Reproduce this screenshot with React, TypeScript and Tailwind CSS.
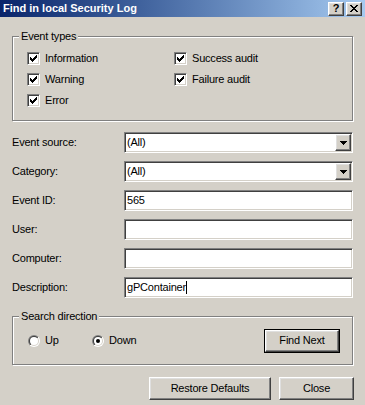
import React from "react";

const raised =
  "border border-t-white border-l-white border-r-[#404040] border-b-[#404040] shadow-[inset_-1px_-1px_0_#808080,inset_1px_1px_0_#dfdfdf] bg-[#d4d0c8]";
const sunken =
  "border border-t-[#808080] border-l-[#808080] border-r-white border-b-white shadow-[inset_1px_1px_0_#404040,inset_-1px_-1px_0_#d4d0c8]";
const etched =
  "border border-[#808080] shadow-[inset_1px_1px_0_#fff,1px_1px_0_#fff]";

const CHECK = [
  "......X",
  ".....XX",
  "X...XXX",
  "XX.XXX.",
  "XXXXX..",
  ".XXX...",
  "..X....",
];

function Checkbox({ label }: { label: string }) {
  return (
    <div className="flex items-center h-[13px]">
      <div className={`w-[13px] h-[13px] bg-white flex items-center justify-center ${sunken}`}>
        <svg width="7" height="7" viewBox="0 0 7 7" shapeRendering="crispEdges">
          {CHECK.flatMap((row, y) =>
            row.split("").map((c, x) =>
              c === "X" ? <rect key={`${x}-${y}`} x={x} y={y} width="1" height="1" fill="#000" /> : null
            )
          )}
        </svg>
      </div>
      <span className="ml-[5px] leading-[13px]">{label}</span>
    </div>
  );
}

function Radio({ checked, label }: { checked: boolean; label: string }) {
  const id = checked ? "r1" : "r0";
  return (
    <div className="flex items-center">
      <svg width="12" height="12" viewBox="0 0 12 12">
        <defs>
          <linearGradient id={`${id}a`} x1="0" y1="0" x2="1" y2="1">
            <stop offset="0.5" stopColor="#808080" />
            <stop offset="0.5" stopColor="#ffffff" />
          </linearGradient>
          <linearGradient id={`${id}b`} x1="0" y1="0" x2="1" y2="1">
            <stop offset="0.5" stopColor="#404040" />
            <stop offset="0.5" stopColor="#d4d0c8" />
          </linearGradient>
        </defs>
        <circle cx="6" cy="6" r="6" fill={`url(#${id}a)`} />
        <circle cx="6" cy="6" r="5" fill={`url(#${id}b)`} />
        <circle cx="6" cy="6" r="4" fill="#fff" />
        {checked && <circle cx="6" cy="6" r="2" fill="#000" />}
      </svg>
      <span className="ml-[5px]">{label}</span>
    </div>
  );
}

function DropArrow() {
  return (
    <div className={`w-[16px] h-[17px] flex items-center justify-center ${raised}`}>
      <svg width="7" height="4" viewBox="0 0 7 4" shapeRendering="crispEdges">
        <path d="M0 0h7v1H0z M1 1h5v1H1z M2 2h3v1H2z M3 3h1v1H3z" fill="#000" />
      </svg>
    </div>
  );
}

function Field({
  label,
  value,
  combo,
  cursor,
}: {
  label: string;
  value?: string;
  combo?: boolean;
  cursor?: boolean;
}) {
  return (
    <div className="flex items-center h-[21px]">
      <div className="w-[112px]">{label}</div>
      <div className={`flex-1 h-[21px] bg-white flex items-center pl-[2px] pr-[1px] ${sunken}`}>
        <div className="flex-1 flex items-center">
          <span>{value}</span>
          {cursor && <span className="w-px h-[13px] bg-black" />}
        </div>
        {combo && <DropArrow />}
      </div>
    </div>
  );
}

export default function App() {
  return (
    <div className="w-[365px] h-[405px] bg-[#d4d0c8] flex flex-col overflow-hidden text-[11px] text-black font-['Liberation_Sans',Arial,sans-serif] tracking-[-0.2px]">
      {/* Title bar */}
      <div className="h-[17px] bg-linear-to-r from-[#0a246a] to-[#a6caf0] flex items-center pl-[3px] pr-[3px]">
        <span className="text-white font-bold text-[11px] tracking-normal leading-none">
          Find in local Security Log
        </span>
        <div className="ml-auto flex gap-[2px]">
          <div className={`w-[16px] h-[14px] flex items-center justify-center font-bold text-[11px] leading-none ${raised}`}>
            ?
          </div>
          <div className={`w-[16px] h-[14px] flex items-center justify-center ${raised}`}>
            <svg width="8" height="7" viewBox="0 0 8 7" shapeRendering="crispEdges">
              <path
                d="M0 0h2v1H0z M6 0h2v1H6z M1 1h2v1H1z M5 1h2v1H5z M2 2h4v1H2z M3 3h2v1H3z M2 4h4v1H2z M1 5h2v1H1z M5 5h2v1H5z M0 6h2v1H0z M6 6h2v1H6z"
                fill="#000"
              />
            </svg>
          </div>
        </div>
      </div>

      <div className="px-[12px] flex flex-col">
        {/* Event types */}
        <div className={`relative mt-[19px] h-[85px] pt-[15px] pl-[14px] ${etched}`}>
          <span className="absolute -top-[7px] left-[6px] px-[2px] bg-[#d4d0c8] leading-[13px]">
            Event types
          </span>
          <div className="grid grid-cols-[147px_1fr] gap-y-[8px]">
            <Checkbox label="Information" />
            <Checkbox label="Success audit" />
            <Checkbox label="Warning" />
            <Checkbox label="Failure audit" />
            <Checkbox label="Error" />
          </div>
        </div>

        {/* Fields */}
        <div className="mt-[11px] flex flex-col gap-[8px]">
          <Field label="Event source:" value="(All)" combo />
          <Field label="Category:" value="(All)" combo />
          <Field label="Event ID:" value="565" />
          <Field label="User:" />
          <Field label="Computer:" />
          <Field label="Description:" value="gPContainer" cursor />
        </div>

        {/* Search direction */}
        <div className={`relative mt-[18px] h-[49px] flex items-center pl-[15px] pr-[12px] ${etched}`}>
          <span className="absolute -top-[7px] left-[6px] px-[2px] bg-[#d4d0c8] leading-[13px]">
            Search direction
          </span>
          <div className="w-[64px]">
            <Radio checked={false} label="Up" />
          </div>
          <Radio checked label="Down" />
          <div className="ml-auto border border-black">
            <div className={`w-[74px] h-[22px] flex items-center justify-center ${raised}`}>
              Find Next
            </div>
          </div>
        </div>

        {/* Bottom buttons */}
        <div className="mt-[12px] flex justify-end gap-[8px] pr-[-1px]">
          <div className={`w-[122px] h-[23px] flex items-center justify-center ${raised}`}>
            Restore Defaults
          </div>
          <div className={`w-[75px] h-[23px] flex items-center justify-center mr-[-1px] ${raised}`}>
            Close
          </div>
        </div>
      </div>
    </div>
  );
}
